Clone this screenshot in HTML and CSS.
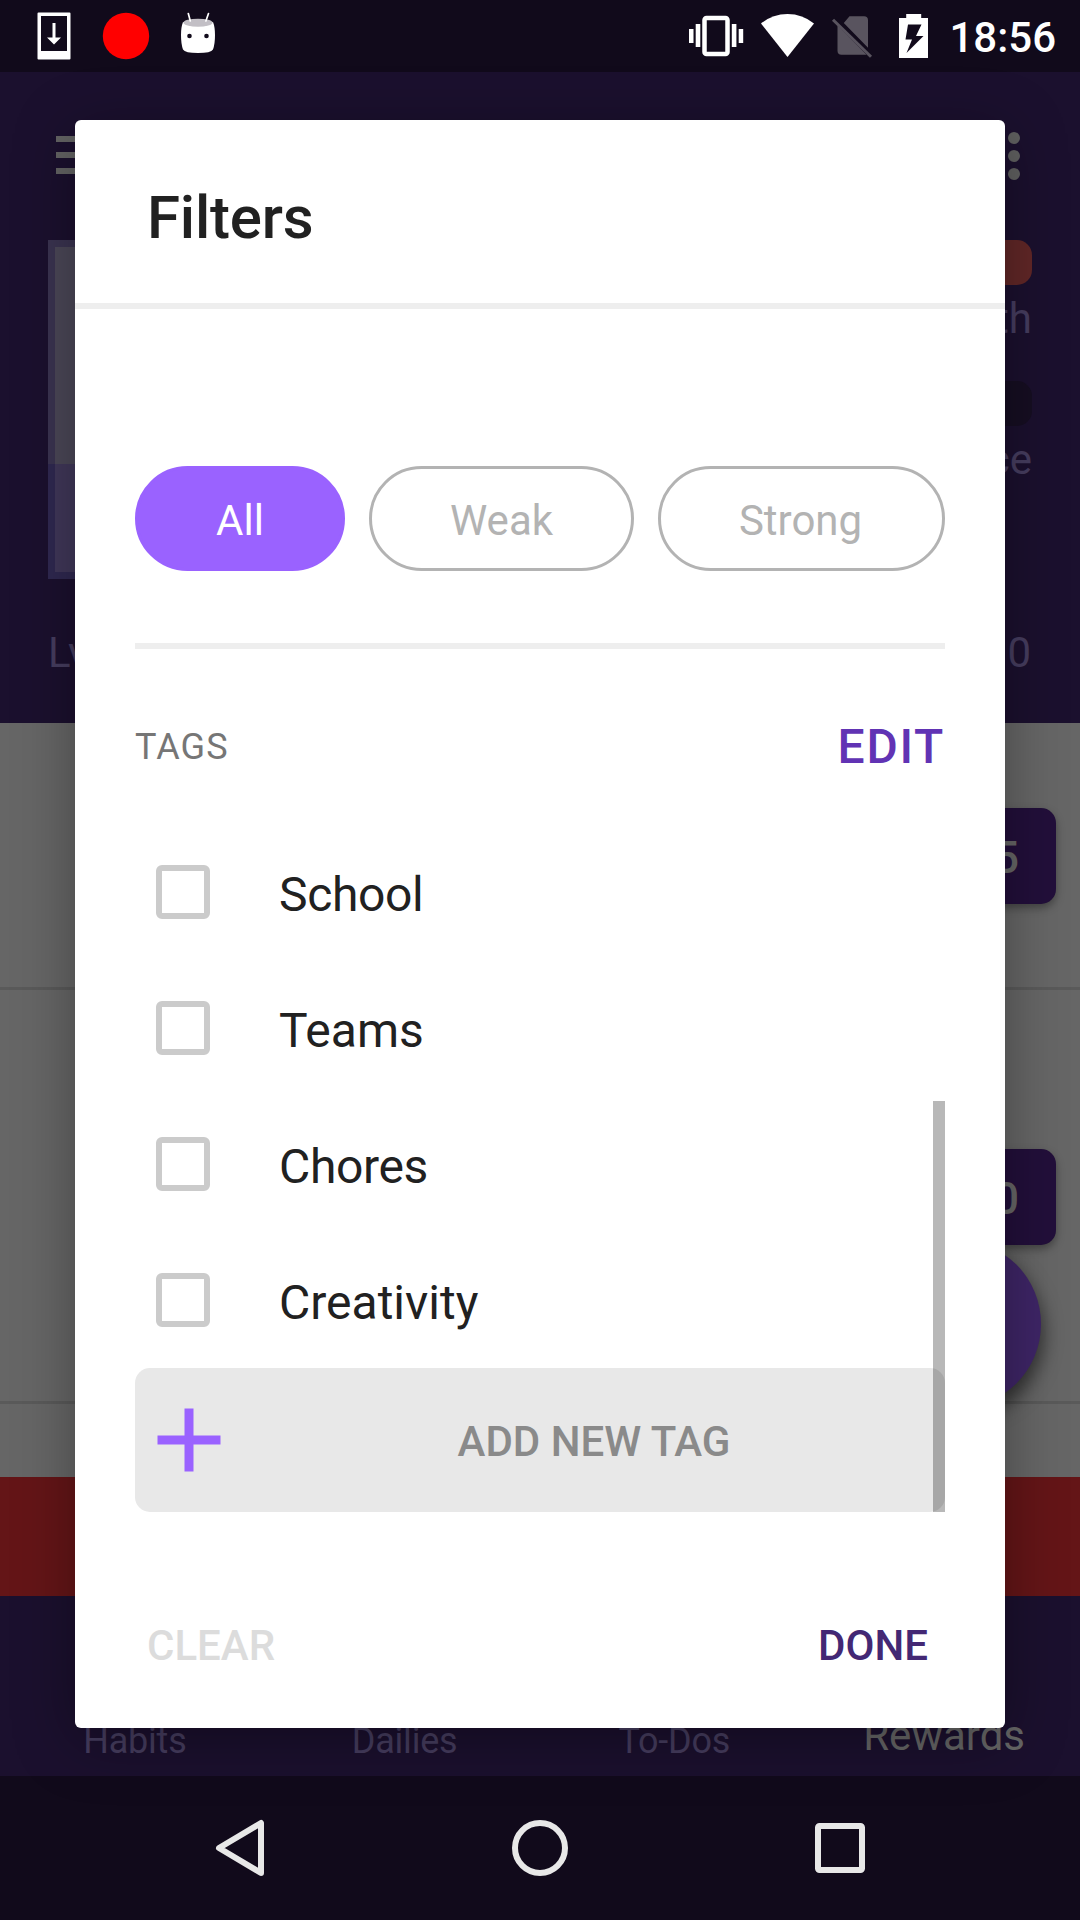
FILE: index.html
```html
<!DOCTYPE html>
<html lang="en">
<head>
<meta charset="utf-8">
<title>Filters</title>
<link rel="stylesheet" href="styles.css">
</head>
<body>
<div class="screen">
  <header class="status">
    <svg class="status-left" width="220" height="72" viewBox="0 0 220 72">
      <path fill="#fff" fill-rule="evenodd" d="M38.500 12.500h31a1 1 0 0 1 1 1v45a1 1 0 0 1-1 1h-31a1 1 0 0 1-1-1v-45a1 1 0 0 1 1-1zM41 16v35h26V16z"/>
      <path fill="#fff" d="M52.500 23h3v14.500h5.500L54 44.500l-7-7h5.500z"/>
      <circle cx="126" cy="36" r="23.200" fill="#f00"/>
      <path fill="#fff" d="M183 22q15 5 30 0q2 5 2 13q0 9-2 14.500q-2 3.500-15 3.500t-15-3.500q-2-5.500-2-14.500q0-8 2-13z"/>
      <ellipse cx="198" cy="22.700" rx="14.500" ry="4" fill="#c2bfc5"/>
      <path stroke="#fff" stroke-width="1.700" stroke-linecap="round" d="M188.300 13.500l2 7.500M208.500 13.500l-2.600 7.500"/>
      <circle cx="189.500" cy="36" r="2.300" fill="#110a1b"/><circle cx="206.500" cy="36" r="2.300" fill="#110a1b"/>
    </svg>
    <div class="status-right">
      <svg width="260" height="72" viewBox="680 0 260 72">
        <rect x="704.500" y="18" width="23" height="36" rx="2" fill="none" stroke="#fff" stroke-width="4.500"/>
        <path fill="#fff" d="M689 29h4.500v14H689zM695.700 24h4.600v23h-4.600zM731.800 24h4.600v23h-4.600zM738.700 29h4.500v14h-4.500z"/>
        <path fill="#fff" d="M761 23.500Q772.500 14 787.500 14T814 23.500L787.500 57z"/>
        <path fill="#59545f" d="M849.500 16.300H864a4 4 0 0 1 4 4v27.400L843.800 23zM837.500 25.500L866.500 54.700H841.500a4 4 0 0 1-4-4z"/>
        <path stroke="#59545f" stroke-width="3" d="M833 19.700l38 37"/>
        <path fill="#fff" fill-rule="evenodd" d="M899 18h7.200v-4h15v4H928v40h-29zM908 24.500l-2.500 15h6.500l-5.500 13.500L923.500 36h-7.500l5.500-11.500z"/>
      </svg>
      <span class="clock">18:56</span>
    </div>
  </header>

  <section class="profile">
    <div class="toolbar">
      <div class="menu"><i></i><i></i><i></i></div>
      <div class="more"><i></i><i></i><i></i></div>
    </div>
    <div class="stats">
      <div class="avatar"></div>
      <div class="bars">
        <div class="bar health"></div>
        <div class="bar-label">Health</div>
        <div class="bar xp"></div>
        <div class="bar-label">Experience</div>
      </div>
    </div>
    <div class="level"><span>Lv</span><span>0</span></div>
  </section>

  <main class="tasks">
    <div class="task first"><div class="price">5</div></div>
    <div class="task second"><div class="price">0</div></div>
    <div class="fab"></div>
  </main>
  <div class="notice"></div>
  <nav class="tabs">
    <span>Habits</span><span>Dailies</span><span>To-Dos</span><span class="current">Rewards</span>
  </nav>
  <footer class="navbar">
    <svg width="60" height="60" viewBox="0 0 60 60"><path d="M51 5v50L9 30z"/></svg>
    <svg width="60" height="60" viewBox="0 0 60 60"><circle cx="30" cy="30" r="25"/></svg>
    <svg width="60" height="60" viewBox="0 0 60 60"><rect x="8" y="8" width="44" height="44" rx="1.500"/></svg>
  </footer>

  <div class="dialog">
    <h1 class="title">Filters</h1>
    <div class="content">
      <div class="pills">
        <button class="pill active">All</button>
        <button class="pill weak">Weak</button>
        <button class="pill strong">Strong</button>
      </div>
      <div class="tags-head"><span class="tags-label">TAGS</span><button class="edit">EDIT</button></div>
      <div class="tag-list">
        <label class="tag"><i class="box"></i><span class="tight">School</span></label>
        <label class="tag"><i class="box"></i><span>Teams</span></label>
        <label class="tag"><i class="box"></i><span class="tight">Chores</span></label>
        <label class="tag"><i class="box"></i><span>Creativity</span></label>
        <button class="add">
          <svg width="64" height="64" viewBox="0 0 64 64"><path d="M32 .500v63M.500 32h63" stroke="#9a62ff" stroke-width="9"/></svg>
          <span>ADD NEW TAG</span>
        </button>
        <div class="scrollbar"></div>
      </div>
    </div>
    <div class="actions"><button class="clear">CLEAR</button><button class="done">DONE</button></div>
  </div>
</div>
</body>
</html>
```

FILE: styles.css
```css
* { box-sizing: border-box; }
body { margin: 0; font-family: Roboto, sans-serif; }
button { border: 0; padding: 0; margin: 0; background: none; font: inherit; color: inherit; }
.screen { position: relative; width: 1080px; height: 1920px; overflow: hidden; display: flex; flex-direction: column; background: #666; }

.status { height: 72px; background: #110a1b; display: flex; justify-content: space-between; }
.status svg { display: block; }
.status-right { display: flex; padding-right: 24px; }
.clock { width: 116px; text-align: right; font-size: 42px; font-weight: 500; line-height: 75px; color: #fff; white-space: nowrap; }

.profile { height: 651px; background: #1b102e; }
.toolbar { height: 168px; padding: 0 60px 0 56px; display: flex; justify-content: space-between; }
.menu { padding-top: 64px; display: flex; flex-direction: column; gap: 10px; }
.menu i { width: 54px; height: 6px; background: #636363; }
.more { padding-top: 60px; display: flex; flex-direction: column; gap: 6px; }
.more i { width: 12px; height: 12px; border-radius: 50%; background: #606060; }
.stats { height: 382px; padding: 0 48px; display: flex; justify-content: space-between; }
.avatar { width: 345px; height: 339px; border: 7px solid #3a3350; border-image: linear-gradient(#3a3350 66%, #2f2850 66%) 7; background: linear-gradient(#4b4757 66.800%, #403759 66.800%); }
.bars { width: 560px; text-align: right; }
.bar { height: 45px; border-radius: 15px; }
.health { background: #612727; }
.xp { background: #160e22; }
.bar-label { height: 96px; padding-top: 9px; font-size: 42px; line-height: 50px; color: #463d5f; }
.level { display: flex; justify-content: space-between; padding: 6px 49px 0 48px; font-size: 42px; line-height: 50px; color: #463d5f; }

.tasks { position: relative; height: 754px; background: #666; }
.task { display: flex; justify-content: flex-end; padding: 85px 24px 0 0; border-bottom: 3px solid #5a5a5a; }
.first { height: 267px; }
.second { height: 414px; padding-top: 159px; }
.price { width: 144px; height: 96px; padding: 3px 37px 0 0; border-radius: 15px; background: #220f3a; color: #666; font-size: 45px; font-weight: 500; line-height: 94px; text-align: right; box-shadow: 0 4px 8px rgba(0,0,0,.35); }
.fab { position: absolute; left: 873px; top: 517px; width: 168px; height: 168px; border-radius: 50%; background: #3e2566; box-shadow: 3px 10px 18px rgba(0,0,0,.5); }
.notice { height: 119px; background: #641517; }
.tabs { height: 180px; background: #1b102e; display: grid; grid-template-columns: repeat(4, 1fr); text-align: center; font-size: 36px; line-height: 40px; padding: 125px 1px 0 0; margin-right: 0; color: #463d5f; letter-spacing: -.2px; }
.tabs .current { color: #666; font-size: 42px; line-height: 29px; letter-spacing: 0; }
.navbar { height: 144px; background: #110a1b; display: flex; justify-content: center; align-items: center; gap: 240px; }
.navbar svg { fill: none; stroke: #e8e8e8; stroke-width: 6; stroke-linejoin: round; }

.dialog { position: absolute; left: 75px; top: 120px; width: 930px; height: 1608px; background: #fff; border-radius: 6px; display: flex; flex-direction: column; box-shadow: 0 12px 60px rgba(0,0,0,.34); }
.title { margin: 0; height: 189px; padding: 62px 72px 0; border-bottom: 6px solid #eee; font-size: 60px; line-height: 71px; font-weight: 500; letter-spacing: -.2px; color: #212121; }
.content { padding: 157px 60px 0; }
.pills { height: 183px; display: flex; gap: 24px; border-bottom: 6px solid #eee; }
.pill { height: 105px; padding-top: 4px; border: 3px solid #b3b3b3; border-radius: 53px; font-size: 42px; color: #b3b3b3; }
.active { width: 210px; background: #9a62ff; border-color: #9a62ff; color: #fff; }
.weak { width: 265px; }
.strong { width: 287px; padding-right: 2px; }
.tags-head { height: 175px; padding-bottom: 2px; display: flex; justify-content: space-between; align-items: center; padding-top: 22px; }
.tags-label { font-size: 36px; letter-spacing: 1.100px; color: #767676; }
.edit { font-size: 48px; font-weight: 500; letter-spacing: 1.700px; color: #6133b4; }
.tag-list { position: relative; }
.tag { height: 136px; padding-left: 21px; display: flex; align-items: center; gap: 69px; font-size: 48px; color: #212121; }
.tag span { padding-top: 5px; }
.tag .tight { letter-spacing: -.35px; }
.box { width: 54px; height: 54px; border: 6px solid #cbcbcb; border-radius: 6px; }
.add { width: 810px; height: 144px; border-radius: 15px; background: #e8e8e8; display: flex; align-items: center; padding-left: 22px; font-size: 42px; font-weight: 500; color: #8a8a8a; }
.add span { flex: 1; padding: 3px 0 0 22px; text-align: center; }
.scrollbar { position: absolute; right: 0; bottom: 0; width: 12px; height: 411px; background: rgba(0,0,0,.28); }
.actions { margin-top: 84px; padding: 0 77px 0 72px; display: flex; justify-content: space-between; font-size: 42px; font-weight: 500; line-height: 99px; }
.clear { color: #dcdcdc; }
.done { color: #432874; }
```
